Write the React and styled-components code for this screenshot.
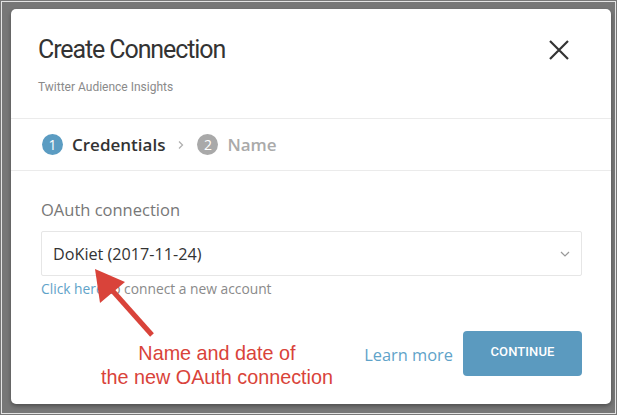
import React from 'react';
import styled, { createGlobalStyle } from 'styled-components';

const GlobalStyle = createGlobalStyle`
  html, body {
    margin: 0;
    padding: 0;
    width: 617px;
    height: 415px;
    overflow: hidden;
    background: #777777;
    font-family: "Open Sans", "Liberation Sans", sans-serif;
  }
`;

const Frame = styled.div`
  box-sizing: border-box;
  width: 617px;
  height: 415px;
  padding: 1px;
`;

const FrameInner = styled.div`
  box-sizing: border-box;
  height: 100%;
  border: 1px solid #e4e4e4;
  padding: 7px 4px 9px 9px;
  display: flex;
`;

const Card = styled.div`
  position: relative;
  flex: 1;
  background: #fff;
  border-radius: 5px;
  box-shadow: 0 2px 4px rgba(0, 0, 0, 0.35);
  display: flex;
  flex-direction: column;
`;

const Header = styled.div`
  display: flex;
  justify-content: space-between;
  align-items: flex-start;
  padding: 25px 41px 0 27px;
  height: 110px;
  box-sizing: border-box;
  border-bottom: 1px solid #ebebeb;
`;

const TitleBlock = styled.div`
  display: flex;
  flex-direction: column;
  gap: 13px;
`;

const Title = styled.h1`
  margin: 0;
  font-family: Roboto, "Liberation Sans", sans-serif;
  font-size: 25px;
  font-weight: 400;
  color: #333;
  line-height: 32px;
  letter-spacing: -1.1px;
`;

const Subtitle = styled.div`
  font-family: Roboto, "Liberation Sans", sans-serif;
  font-size: 12px;
  color: #8a8a8a;
  line-height: 16px;
`;

const Close = styled.button`
  border: none;
  background: none;
  padding: 0;
  margin-top: 5px;
  width: 22px;
  height: 22px;
  cursor: pointer;
`;

const Steps = styled.div`
  display: flex;
  align-items: center;
  gap: 10px;
  height: 51px;
  padding-left: 31px;
  border-bottom: 1px solid #ebebeb;
`;

const Step = styled.div`
  display: flex;
  align-items: center;
  gap: 9px;
  font-size: 17px;
  font-weight: 600;
  color: ${(p) => (p.active ? '#333' : '#aaa')};
`;

const StepNum = styled.span`
  width: 21px;
  height: 21px;
  border-radius: 50%;
  background: ${(p) => (p.active ? '#5b9cc2' : '#a9a9a9')};
  color: #fff;
  font-size: 14px;
  font-weight: 400;
  display: flex;
  align-items: center;
  justify-content: center;
`;

const Chevron = styled.span`
  display: flex;
  margin: 0 2px 0 2px;
`;

const Body = styled.div`
  padding: 29px 29px 0 30px;
  display: flex;
  flex-direction: column;
`;

const Label = styled.div`
  font-size: 16.5px;
  color: #777;
  line-height: 20px;
  margin-bottom: 11px;
`;

const Select = styled.div`
  box-sizing: border-box;
  height: 45px;
  border: 1px solid #e6e6e6;
  border-radius: 2px;
  display: flex;
  align-items: center;
  justify-content: space-between;
  padding: 0 10px 0 11px;
  font-size: 16.2px;
  color: #333;
`;

const Hint = styled.div`
  margin-top: 5px;
  font-size: 13.8px;
  color: #8a8a8a;
  line-height: 16px;
`;

const Link = styled.a`
  color: #5fa3c9;
  text-decoration: none;
`;

const Footer = styled.div`
  display: flex;
  justify-content: flex-end;
  align-items: center;
  gap: 10px;
  padding: 34px 29px 0 0;
`;

const LearnMore = styled.a`
  font-size: 16.4px;
  color: #5fa3c9;
  text-decoration: none;
  margin-top: 2px;
`;

const Continue = styled.button`
  width: 119px;
  height: 45px;
  border: none;
  border-radius: 4px;
  background: #5b9abf;
  color: #fff;
  font-family: Roboto, "Liberation Sans", sans-serif;
  font-size: 13px;
  font-weight: 500;
  letter-spacing: 0.1px;
  padding-bottom: 6px;
`;

const Annotation = styled.div`
  position: absolute;
  left: 0;
  top: 0;
  width: 100%;
  height: 100%;
  pointer-events: none;
`;

const Arrow = styled.svg`
  position: absolute;
  left: 0;
  top: 0;
`;

const Note = styled.div`
  position: absolute;
  left: 56px;
  top: 332px;
  width: 300px;
  text-align: center;
  font-family: "Liberation Sans", Arial, sans-serif;
  font-size: 19.8px;
  line-height: 24px;
  color: #d9433a;
`;

export default function App() {
  return (
    <>
      <GlobalStyle />
      <Frame>
        <FrameInner>
          <Card>
            <Header>
              <TitleBlock>
                <Title>Create Connection</Title>
                <Subtitle>Twitter Audience Insights</Subtitle>
              </TitleBlock>
              <Close aria-label="Close">
                <svg width="22" height="22" viewBox="0 0 22 22">
                  <path d="M2 2 L20 20 M20 2 L2 20" stroke="#333" strokeWidth="2.2" />
                </svg>
              </Close>
            </Header>
            <Steps>
              <Step active>
                <StepNum active>1</StepNum>
                Credentials
              </Step>
              <Chevron>
                <svg width="8" height="10" viewBox="0 0 8 10">
                  <path d="M2 1.5 L5.5 5 L2 8.5" stroke="#b0b0b0" strokeWidth="1.3" fill="none" />
                </svg>
              </Chevron>
              <Step>
                <StepNum>2</StepNum>
                Name
              </Step>
            </Steps>
            <Body>
              <Label>OAuth connection</Label>
              <Select>
                <span>DoKiet (2017-11-24)</span>
                <svg width="12" height="8" viewBox="0 0 12 8">
                  <path d="M2 2 L6 6 L10 2" stroke="#999" strokeWidth="1.2" fill="none" />
                </svg>
              </Select>
              <Hint>
                <Link href="#">Click here</Link> to connect a new account
              </Hint>
            </Body>
            <Footer>
              <LearnMore href="#">Learn more</LearnMore>
              <Continue>CONTINUE</Continue>
            </Footer>
            <Annotation>
              <Arrow width="599" height="394">
                <line x1="141" y1="326" x2="100" y2="280" stroke="#d9433a" strokeWidth="5" />
                <polygon points="84,260 114,273 89,294" fill="#d9433a" />
              </Arrow>
              <Note>
                Name and date of
                <br />
                the new OAuth connection
              </Note>
            </Annotation>
          </Card>
        </FrameInner>
      </Frame>
    </>
  );
}
